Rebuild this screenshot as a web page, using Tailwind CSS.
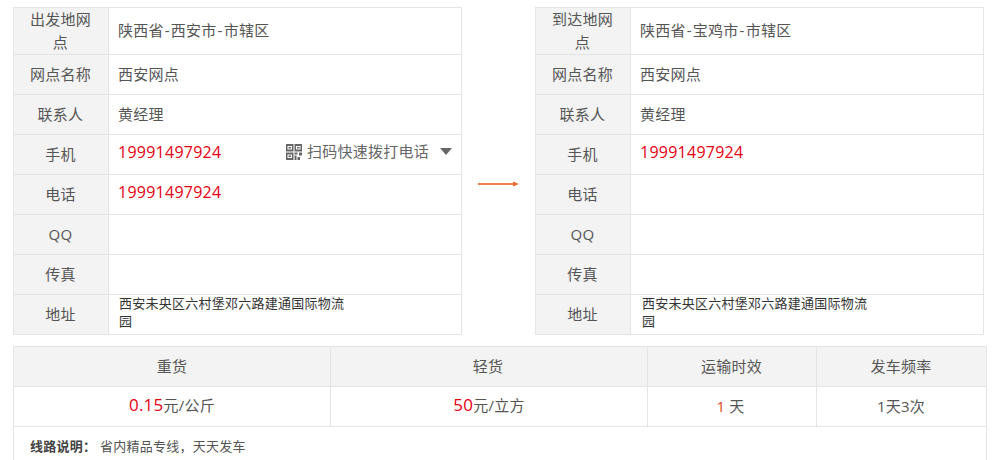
<!DOCTYPE html>
<html lang="zh-CN">
<head>
    <meta charset="UTF-8">
    <title>线路详情</title>
    <script src="https://cdn.jsdelivr.net/npm/@tailwindcss/browser@4"></script>
</head>
<body class="bg-white h-[460px] overflow-hidden font-['Open_Sans','Noto_Sans_CJK_SC',sans-serif] text-[15px] tracking-[0.25px] text-[#555]">
    <div class="pt-[7px] pl-[13px]">
        <!-- 网点信息 -->
        <div class="flex items-center">
            <div class="w-[449px] border border-[#e4e4e4] border-b-0">
                <div class="flex h-[47px] border-b border-[#e4e4e4]">
                    <div class="w-[95px] shrink-0 bg-[#f3f3f3] border-r border-[#e4e4e4] text-center leading-[23px] pl-[15px] pr-[16px]">出发地网点</div>
                    <div class="flex-1 flex items-center pl-[9px] pb-[2px]"><span>陕西省<span class="mx-[1px]">-</span>西安市<span class="mx-[1px]">-</span>市辖区</span></div>
                </div>
                <div class="flex h-[40px] border-b border-[#e4e4e4]">
                    <div class="w-[95px] shrink-0 bg-[#f3f3f3] border-r border-[#e4e4e4] flex items-center justify-center pr-[1px]">网点名称</div>
                    <div class="flex-1 flex items-center pl-[9px]">西安网点</div>
                </div>
                <div class="flex h-[40px] border-b border-[#e4e4e4]">
                    <div class="w-[95px] shrink-0 bg-[#f3f3f3] border-r border-[#e4e4e4] flex items-center justify-center pr-[1px]">联系人</div>
                    <div class="flex-1 flex items-center pl-[9px]">黄经理</div>
                </div>
                <div class="flex h-[40px] border-b border-[#e4e4e4]">
                    <div class="w-[95px] shrink-0 bg-[#f3f3f3] border-r border-[#e4e4e4] flex items-center justify-center pr-[1px]">手机</div>
                    <div class="flex-1 flex items-center justify-between pl-[9px] pr-[9px] pb-[5px]">
                        <span class="text-[16px] text-[#e60012]">19991497924</span>
                        <span class="flex items-center text-[#666] mb-[1px]">
                            <svg class="w-[16px] h-[16px] mr-[5px]" viewBox="0 0 16 16" fill="#666">
                                <path fill-rule="evenodd" d="M0 0h7.500v7.500H0zM1.500 2v3.500h4.500V2zM8.500 0h7.500v7.500H8.500zM10 2v3.500h4.500V2zM0 8.500h7.500V16H0zM1.500 10.500V14h4.500v-3.500z"/>
                                <path d="M2.500 3h2.500v1.500H2.500zM11 3h2.500v1.500H11zM2.500 11.500h2.500V13H2.500zM8.500 8.500h3v2h-3zM13 8.500h3v3h-3zM8.500 11.500h2V16h-2zM11.500 13h2.500v3h-2.500z"/>
                            </svg>
                            扫码快速拨打电话
                            <svg class="w-[12px] h-[7px] ml-[11px]" viewBox="0 0 12 7" fill="#666"><path d="M0 0h12L6 7z"/></svg>
                        </span>
                    </div>
                </div>
                <div class="flex h-[40px] border-b border-[#e4e4e4]">
                    <div class="w-[95px] shrink-0 bg-[#f3f3f3] border-r border-[#e4e4e4] flex items-center justify-center pr-[1px]">电话</div>
                    <div class="flex-1 flex items-center pl-[9px] pb-[5px] text-[16px] text-[#e60012]">19991497924</div>
                </div>
                <div class="flex h-[40px] border-b border-[#e4e4e4]">
                    <div class="w-[95px] shrink-0 bg-[#f3f3f3] border-r border-[#e4e4e4] flex items-center justify-center pr-[1px]">QQ</div>
                    <div class="flex-1"></div>
                </div>
                <div class="flex h-[40px] border-b border-[#e4e4e4]">
                    <div class="w-[95px] shrink-0 bg-[#f3f3f3] border-r border-[#e4e4e4] flex items-center justify-center pr-[1px]">传真</div>
                    <div class="flex-1"></div>
                </div>
                <div class="flex h-[40px] border-b border-[#e4e4e4]">
                    <div class="w-[95px] shrink-0 bg-[#f3f3f3] border-r border-[#e4e4e4] flex items-center justify-center pr-[1px]">地址</div>
                    <div class="flex-1 pl-[10px] text-[13px] leading-[18px] text-[#333]"><div class="w-[230px] -mt-[1px]">西安未央区六村堡邓六路建通国际物流园</div></div>
                </div>
            </div>

            <!-- 箭头 -->
            <div class="w-[73px] flex justify-center pt-[26px]">
                <svg class="w-[41px] h-[6px]" viewBox="0 0 41 6"><path d="M0 2h35V4H0z" fill="#f08050"/><path d="M35 .5l6 2.500-6 2.500z" fill="#f0682c"/></svg>
            </div>

            <div class="w-[449px] border border-[#e4e4e4] border-b-0">
                <div class="flex h-[47px] border-b border-[#e4e4e4]">
                    <div class="w-[95px] shrink-0 bg-[#f3f3f3] border-r border-[#e4e4e4] text-center leading-[23px] pl-[15px] pr-[16px]">到达地网点</div>
                    <div class="flex-1 flex items-center pl-[9px] pb-[2px]"><span>陕西省<span class="mx-[1px]">-</span>宝鸡市<span class="mx-[1px]">-</span>市辖区</span></div>
                </div>
                <div class="flex h-[40px] border-b border-[#e4e4e4]">
                    <div class="w-[95px] shrink-0 bg-[#f3f3f3] border-r border-[#e4e4e4] flex items-center justify-center pr-[1px]">网点名称</div>
                    <div class="flex-1 flex items-center pl-[9px]">西安网点</div>
                </div>
                <div class="flex h-[40px] border-b border-[#e4e4e4]">
                    <div class="w-[95px] shrink-0 bg-[#f3f3f3] border-r border-[#e4e4e4] flex items-center justify-center pr-[1px]">联系人</div>
                    <div class="flex-1 flex items-center pl-[9px]">黄经理</div>
                </div>
                <div class="flex h-[40px] border-b border-[#e4e4e4]">
                    <div class="w-[95px] shrink-0 bg-[#f3f3f3] border-r border-[#e4e4e4] flex items-center justify-center pr-[1px]">手机</div>
                    <div class="flex-1 flex items-center pl-[9px] pb-[5px] text-[16px] text-[#e60012]">19991497924</div>
                </div>
                <div class="flex h-[40px] border-b border-[#e4e4e4]">
                    <div class="w-[95px] shrink-0 bg-[#f3f3f3] border-r border-[#e4e4e4] flex items-center justify-center pr-[1px]">电话</div>
                    <div class="flex-1"></div>
                </div>
                <div class="flex h-[40px] border-b border-[#e4e4e4]">
                    <div class="w-[95px] shrink-0 bg-[#f3f3f3] border-r border-[#e4e4e4] flex items-center justify-center pr-[1px]">QQ</div>
                    <div class="flex-1"></div>
                </div>
                <div class="flex h-[40px] border-b border-[#e4e4e4]">
                    <div class="w-[95px] shrink-0 bg-[#f3f3f3] border-r border-[#e4e4e4] flex items-center justify-center pr-[1px]">传真</div>
                    <div class="flex-1"></div>
                </div>
                <div class="flex h-[40px] border-b border-[#e4e4e4]">
                    <div class="w-[95px] shrink-0 bg-[#f3f3f3] border-r border-[#e4e4e4] flex items-center justify-center pr-[1px]">地址</div>
                    <div class="flex-1 pl-[11px] text-[13px] leading-[18px] text-[#333]"><div class="w-[230px] -mt-[1px]">西安未央区六村堡邓六路建通国际物流园</div></div>
                </div>
            </div>
        </div>

        <!-- 价格 -->
        <div class="mt-[11px] w-[974px] border border-[#e4e4e4] border-b-0">
            <div class="grid grid-cols-[317px_317px_169px_1fr] h-[40px] bg-[#f3f3f3] border-b border-[#e4e4e4] text-center leading-[39px]">
                <div class="border-r border-[#e4e4e4]">重货</div>
                <div class="border-r border-[#e4e4e4] pr-[2px]">轻货</div>
                <div class="border-r border-[#e4e4e4] pr-[1px]">运输时效</div>
                <div class="pr-[1px]">发车频率</div>
            </div>
            <div class="grid grid-cols-[317px_317px_169px_1fr] h-[40px] border-b border-[#e4e4e4] text-center leading-[35px]">
                <div class="border-r border-[#e4e4e4]"><span class="text-[17px] text-[#e60012]">0.15</span>元/公斤</div>
                <div class="border-r border-[#e4e4e4]"><span class="text-[17px] text-[#e60012]">50</span>元/立方</div>
                <div class="border-r border-[#e4e4e4] leading-[38px] pr-[3px]"><span class="text-[#e2401a]">1</span> 天</div>
                <div class="leading-[38px] pr-[1px]">1天3次</div>
            </div>
            <div class="h-[40px] pl-[16px] pt-[10px] text-[13px] text-[#555]"><b class="text-[#444]">线路说明：</b> 省内精品专线，天天发车</div>
        </div>
    </div>
</body>
</html>
